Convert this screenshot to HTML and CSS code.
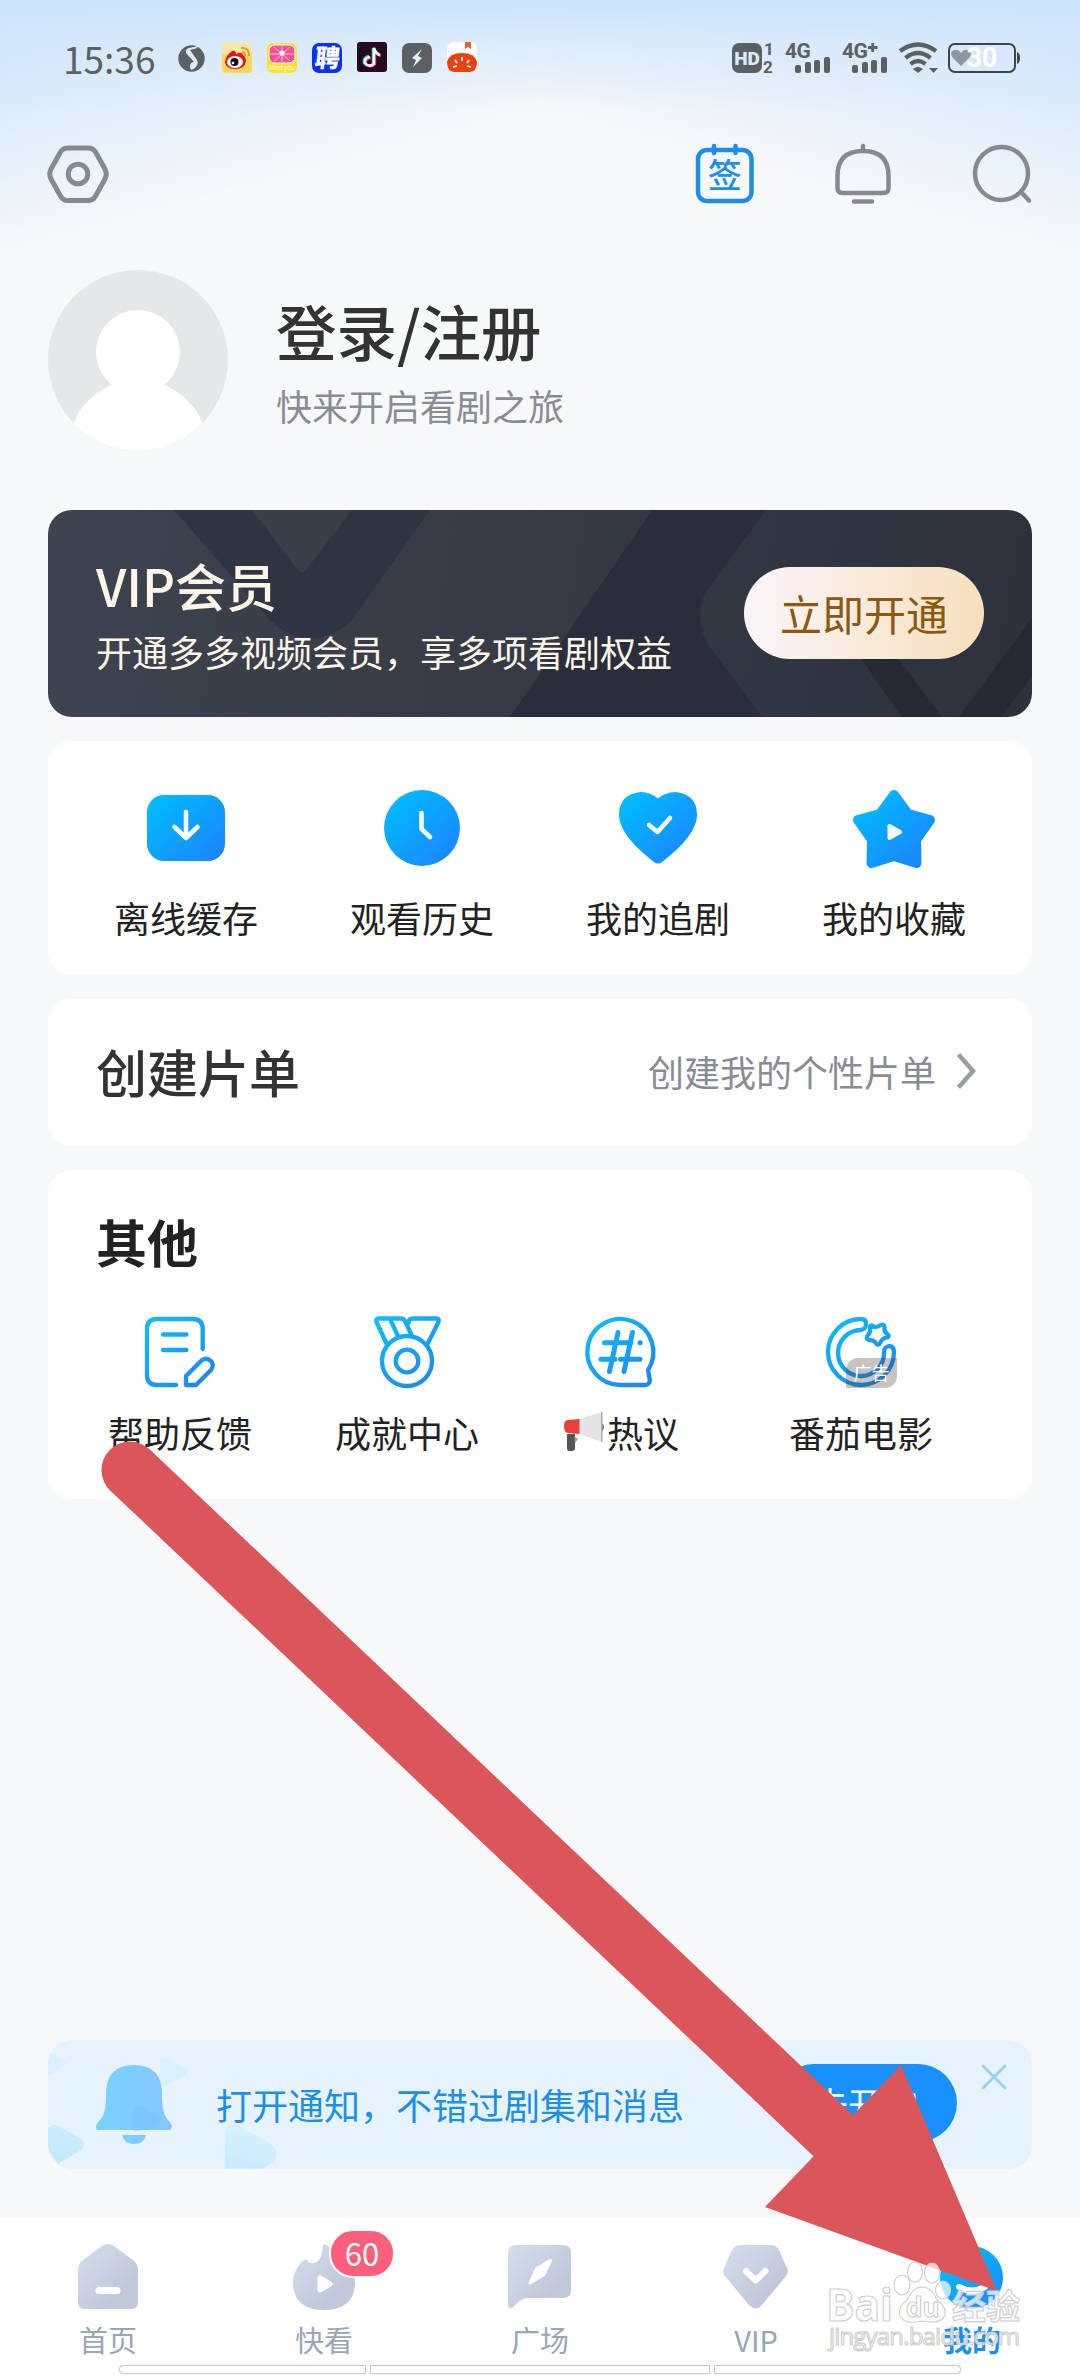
FILE: index.html
```html
<!DOCTYPE html>
<html lang="zh-CN">
<head>
    <meta charset="UTF-8">
    <meta name="viewport" content="width=device-width, initial-scale=1.0">
    <title>我的</title>
    <link rel="stylesheet" href="styles.css">
</head>
<body>
    <!-- gradientes compartilhados -->
    <svg class="defs" width="0" height="0">
        <defs>
            <linearGradient id="blue" gradientUnits="userSpaceOnUse" x1="12" y1="12" x2="70" y2="74">
                <stop offset="0" stop-color="#00bbff"/><stop offset="1" stop-color="#1c86ff"/>
            </linearGradient>
            <linearGradient id="line" gradientUnits="userSpaceOnUse" x1="8" y1="4" x2="62" y2="72">
                <stop offset="0" stop-color="#12bdf3"/><stop offset="1" stop-color="#1f86f2"/>
            </linearGradient>
            <linearGradient id="grey" gradientUnits="userSpaceOnUse" x1="6" y1="10" x2="50" y2="50">
                <stop offset="0" stop-color="#d2dcec"/><stop offset="1" stop-color="#c1c8d9"/>
            </linearGradient>
            <linearGradient id="bell" x1="0" y1="0" x2="1" y2="0">
                <stop offset="0" stop-color="#78d3ff"/><stop offset="1" stop-color="#86c5ff"/>
            </linearGradient>
            <linearGradient id="drop" x1="1" y1="0" x2="0" y2="1">
                <stop offset="0" stop-color="#d8f1fe"/><stop offset="1" stop-color="#c0e7fd"/>
            </linearGradient>
        </defs>
    </svg>

    <div class="phone">
        <div class="status-bar">
            <div class="status-left">
                <span class="time">15:36</span>
                <svg class="app music" viewBox="0 0 27 27">
                    <circle cx="13.5" cy="13.5" r="13.2" fill="#5b6063"/>
                    <path d="M22 0L18 3.500L12 5L19 15Q21 19 17 23Q12 27 12 22Q12 17 16 17L8 8Q7 4 11 3L18 1.500Z" fill="#dcebf9"/>
                </svg>
                <svg class="app" viewBox="0 0 30 30">
                    <rect width="30" height="30" rx="4" fill="#fdd65a"/>
                    <rect width="30" height="12" rx="4" fill="#fbe6a4"/>
                    <path d="M3 19Q4 12 10 8Q14 7 14 11Q20 8 21 12Q24 14 24 18Q23 26 13 26Q4 26 3 19Z" fill="#e6141b"/>
                    <ellipse cx="13" cy="19" rx="8" ry="6" fill="#fff"/>
                    <circle cx="12.5" cy="19" r="4" fill="#111"/><circle cx="11" cy="20" r="1.3" fill="#fff"/>
                    <path d="M19 5Q27 4 27 13M20 9Q23 9 23 13" fill="none" stroke="#f39a1d" stroke-width="2"/>
                </svg>
                <svg class="app" viewBox="0 0 30 30">
                    <rect width="30" height="30" rx="6" fill="#fbe231"/>
                    <rect x="2" y="2" width="26" height="18" rx="6" fill="#f9508f" stroke="#fff"/>
                    <path d="M15 3V19M3 11H27M7 4L23 18M23 4L7 18" stroke="#fcc3da" stroke-width="1"/>
                    <circle cx="15" cy="10" r="2.5" fill="#fff"/>
                    <text x="15" y="27" class="tiny">Meet you</text>
                </svg>
                <svg class="app" viewBox="0 0 30 30">
                    <rect width="30" height="30" rx="7" fill="#0a31f2"/>
                    <text x="17" y="24" class="pin" transform="skewX(-6)">聘</text>
                </svg>
                <svg class="app up" viewBox="0 0 30 30">
                    <rect width="30" height="30" rx="3" fill="#250a1f"/>
                    <path d="M12 14Q6 15 7 21Q11 26 16 22V6Q18 11 22 12" fill="none" stroke="#28e0e4" stroke-width="2.500"/>
                    <path d="M14 16Q8 17 9 22Q13 27 18 22V8Q20 13 24 14" fill="none" stroke="#ee2b52" stroke-width="2.500"/>
                    <path d="M13 15Q7 16 8 21Q12 26 17 22V6Q19 12 23 13" fill="none" stroke="#fff" stroke-width="2.500"/>
                </svg>
                <svg class="app" viewBox="0 0 30 30">
                    <rect width="30" height="30" rx="7" fill="#5b6063"/>
                    <path d="M20 6L10 15L14 17L11 24L20 15L16 13Z" fill="#e3eef8"/>
                </svg>
                <svg class="app up" viewBox="0 0 30 30">
                    <rect width="30" height="30" rx="7" fill="#fff"/>
                    <path d="M18 0H24V7L21 5L18 7Z" fill="#e0633c"/>
                    <path d="M0 20Q2 11 15 11Q28 11 30 20Q30 30 22 30H8Q0 30 0 20Z" fill="#e6420f"/>
                    <path d="M15 15V19M8 18L10 21M22 18L20 21M6 25L10 24M24 25L20 24" stroke="#fff" stroke-width="1.8"/>
                </svg>
            </div>
            <svg class="status-right" viewBox="0 0 290 34">
                <g fill="#5b6063">
                    <rect x="0" y="2" width="30" height="30" rx="7"/>
                    <text x="32" y="14" class="sim">1</text>
                    <text x="31" y="32" class="sim">2</text>
                    <text x="53" y="17" class="net">4G</text>
                    <rect x="63" y="24" width="6" height="8" rx="2"/><rect x="73" y="21" width="6" height="11" rx="2"/>
                    <rect x="82" y="19" width="6" height="13" rx="2"/><rect x="92" y="16" width="6" height="16" rx="2"/>
                    <text x="110" y="17" class="net">4G</text>
                    <path d="M136 6.500H145.500M140.700 2V11" stroke="#5b6063" stroke-width="2.800"/>
                    <rect x="120" y="24" width="6" height="8" rx="2"/><rect x="130" y="21" width="6" height="11" rx="2"/>
                    <rect x="139" y="19" width="6" height="13" rx="2"/><rect x="149" y="16" width="6" height="16" rx="2"/>
                    <path d="M181 28Q186 24 191 28L186 32Z"/>
                    <path d="M197 27H206L201.500 32Z"/>
                </g>
                <text x="15" y="24" class="hd">HD</text>
                <path d="M168 10Q186 -3 204 10M173.500 17Q186 7 198.500 17M178.500 23Q186 17 193.500 23" fill="none" stroke="#5b6063" stroke-width="4.200"/>
                <rect x="217" y="3" width="66" height="28" rx="6" fill="none" stroke="#3f4446" stroke-width="2"/>
                <path d="M285 11Q288 12 288 17Q288 22 285 23Z" fill="#3f4446"/>
                <path d="M229 25L221 17Q217 12 221 9.500Q226 7 229 12Q232 7 237 9.500Q241 12 237 17Z" fill="#8e979e"/>
                <text x="250" y="26" class="level">30</text>
            </svg>
        </div>

        <header class="top-bar">
            <svg class="top-icon" viewBox="0 0 64 64" fill="none" stroke="#868991" stroke-width="5">
                <path d="M22 6H42Q47 6 49.500 10L59 27Q61.500 32 59 37L49.500 54Q47 58.500 42 58.500H22Q17 58.500 14.500 54L5 37Q2.500 32 5 27L14.500 10Q17 6 22 6Z"/>
                <circle cx="32" cy="32" r="9.800"/>
            </svg>
            <div class="top-actions">
                <svg class="top-icon" viewBox="0 0 64 64" fill="none" stroke="#1e8fe9" stroke-width="4.500" stroke-linecap="round">
                    <rect x="6" y="8" width="53.500" height="51" rx="9"/>
                    <path d="M22 4V11M43.500 4V11"/>
                    <text x="32.700" y="46" class="sign">签</text>
                </svg>
                <svg class="top-icon" viewBox="0 0 64 64" fill="none" stroke="#868991" stroke-width="4.500" stroke-linecap="round">
                    <path d="M6.500 34Q6.500 9 32 9Q57.500 9 57.500 34V46Q57.500 51 52.500 51H11.500Q6.500 51 6.500 46ZM32 4V9M23 59.500H41"/>
                </svg>
                <svg class="top-icon" viewBox="0 0 64 64" fill="none" stroke="#868991" stroke-width="4.500" stroke-linecap="round">
                    <circle cx="31.500" cy="31.500" r="26.500"/>
                    <path d="M51 50L59 58.500"/>
                </svg>
            </div>
        </header>

        <section class="profile">
            <svg class="avatar" viewBox="0 0 180 180">
                <clipPath id="round"><circle cx="90" cy="90" r="90"/></clipPath>
                <g clip-path="url(#round)">
                    <rect width="180" height="180" fill="#e6e7e9"/>
                    <circle cx="90" cy="82" r="42" fill="#fff"/>
                    <circle cx="90" cy="200" r="70" fill="#fff"/>
                    <circle cx="90" cy="180" r="70" fill="#fff"/>
                </g>
            </svg>
            <div>
                <h1>登录/注册</h1>
                <p>快来开启看剧之旅</p>
            </div>
        </section>

        <main>
            <section class="vip">
                <svg class="vip-bg" viewBox="0 0 984 207">
                    <path d="M126 0H204L250 60Q254 66 258 60L304 0H382L304 110Q284 128 264 128Q240 128 222 110Z" fill="#2f3540"/>
                    <path d="M604 0H718L658 82Q648 100 655 124Q660 136 664 140L714 207H462Z" fill="#292e3a"/>
                    <path d="M800 130L854 207H894L836 130ZM911 207L984 108V166L953 207Z" fill="#242934"/>
                </svg>
                <div class="vip-text">
                    <h2>VIP会员</h2>
                    <p>开通多多视频会员，享多项看剧权益</p>
                </div>
                <button class="vip-btn">立即开通</button>
            </section>

            <section class="card shortcuts">
                <div class="shortcut">
                    <svg viewBox="0 0 84 84">
                        <rect x="3" y="9" width="78" height="66" rx="17" fill="url(#blue)"/>
                        <path d="M42 26V52M30.500 41L42 52L53.500 41" class="white-line"/>
                    </svg>
                    <span>离线缓存</span>
                </div>
                <div class="shortcut">
                    <svg viewBox="0 0 84 84">
                        <circle cx="42" cy="42" r="38" fill="url(#blue)"/>
                        <path d="M41.500 27V43L50 51" class="white-line"/>
                    </svg>
                    <span>观看历史</span>
                </div>
                <div class="shortcut">
                    <svg viewBox="0 0 84 84">
                        <path d="M42 12.500Q34 6 25 6Q3 8 3 29Q3 49 38 76Q42 79 46 76Q81 49 81 29Q81 8 59 6Q50 6 42 12.500Z" fill="url(#blue)"/>
                        <path d="M33 39L41.500 46L54 32" class="white-line"/>
                    </svg>
                    <span>我的追剧</span>
                </div>
                <div class="shortcut">
                    <svg viewBox="0 0 84 84">
                        <path d="M42 9L28 28L6 34L20 54L19.500 77L42 70L64.500 77L64 54L78 34L56 28Z" fill="url(#blue)" stroke="url(#blue)" stroke-width="10" stroke-linejoin="round"/>
                        <path d="M37.500 40V52L48 46Z" fill="#fff" stroke="#fff" stroke-width="4" stroke-linejoin="round"/>
                    </svg>
                    <span>我的收藏</span>
                </div>
            </section>

            <section class="card playlist">
                <h2>创建片单</h2>
                <div class="playlist-more">
                    <span>创建我的个性片单</span>
                    <svg viewBox="0 0 20 38"><path d="M2.500 2.500L17 19L2.500 35.500" fill="none" stroke="#999e9f" stroke-width="4.500"/></svg>
                </div>
            </section>

            <section class="card others">
                <h2>其他</h2>
                <div class="others-list">
                    <div class="cell"><div class="other">
                        <svg viewBox="0 0 76 76">
                            <path d="M60.700 35V15Q60.700 5 50.700 5H15Q5 5 5 15V61Q5 71 15 71H34M21 20.500H44.500M21 36H44.500"/>
                            <path d="M44 71V62L60 46Q65 43 69 47Q72.500 51 69 56L54 71Z"/>
                        </svg>
                        <span>帮助反馈</span>
                    </div></div>
                    <div class="cell"><div class="other">
                        <svg viewBox="0 0 76 76">
                            <circle cx="38" cy="47" r="25"/><circle cx="38" cy="47" r="11.300"/>
                            <path d="M17.700 30L7.500 8Q6 4.500 10 4.500H32Q35 4.500 36.500 8L42.500 21M21 5L29.500 23M39.500 9Q39.500 4.500 44 4.500H67Q71 4.500 69.500 8L58.500 30"/>
                        </svg>
                        <span>成就中心</span>
                    </div></div>
                    <div class="cell"><div class="other">
                        <svg viewBox="0 0 76 76">
                            <path d="M65 56A33 33 0 1 0 38 71H61Q68 71 66.500 64Z"/>
                            <path d="M35 18.500L26.500 57.500M49.500 18.500L41 57.500M21.500 28.700H48M18 45.300H32M37.500 45.300H57M57 28.700H57.200" class="hash"/>
                        </svg>
                        <span class="with-horn">
                            <svg class="horn" viewBox="0 0 40 40">
                                <path d="M3 22H11V36Q11 39 8 39H5Q3 39 3 36Z" fill="#555"/>
                                <path d="M10 24L14 27L11 31" fill="#999"/>
                                <path d="M37 11Q40 12 40 15Q40 19 37 19Z" fill="#777"/>
                                <path d="M15 7L38 0V30L15 22Z" fill="#e4e4e4"/>
                                <path d="M37 0H38.500V30H37Z" fill="#aaa"/>
                                <path d="M4 8L15.500 7V22L4 21Q0 21 0 14Q0 8 4 8Z" fill="#ea3f3b"/>
                            </svg>热议
                        </span>
                    </div></div>
                    <div class="cell"><div class="other">
                        <svg viewBox="0 0 76 76">
                            <path d="M38 5A33 33 0 1 0 71 38V37Q70 32 66 32Q61 33 61 38A23 23 0 1 1 38 16Q43 15 43 10Q43 5 38 5Z"/>
                            <path d="M50 12Q51 14 56 12Q61 9 61.500 13Q61 18 64 20Q68 23 62 24Q59 25 57 29Q55 33 52 28Q50 26 46 26Q42 25 45 21Q48 18 47 14Q47 10 50 12Z"/>
                        </svg>
                        <em class="ad">广告</em>
                        <span>番茄电影</span>
                    </div></div>
                </div>
            </section>
        </main>

        <section class="notice">
            <svg class="notice-bg" viewBox="0 0 430 129">
                <path d="M0 12Q16 18 18 24Q16 29 0 34ZM112 18Q120 16 136 28Q142 34 134 38L116 46Q112 46 112 40Z" fill="#d9f0fe"/>
                <path d="M0 88Q5 82 14 88L33 99Q38 104 33 110L10 124L0 110ZM177 92Q181 82 192 86L220 102Q240 115 215 129H177Z" fill="url(#drop)"/>
                <path d="M49 90Q46 86 51 81Q58 75 58 56Q57 25 86 25Q115 25 114 56Q114 75 121 81Q126 86 122 90Z" fill="url(#bell)"/>
                <path d="M74 95H98Q96 104 86 104Q76 104 74 95Z" fill="url(#bell)"/>
                <path d="M86 92V68Q88 64 92 66L110 76Q116 80 106 86Z" fill="#74bdf8" opacity=".3"/>
            </svg>
            <p>打开通知，不错过剧集和消息</p>
            <button class="notice-btn">去开启</button>
            <svg class="close" viewBox="0 0 26 26"><path d="M2 2L24 24M24 2L2 24" stroke="#9bcdf8" stroke-width="2.800" stroke-linecap="round"/></svg>
        </section>

        <nav class="tabs">
            <a class="tab">
                <svg viewBox="0 0 72 72">
                    <path d="M30 5Q36 1 42 5L61 19Q66 23 66 29V61Q66 68 59 68H13Q6 68 6 61V29Q6 23 11 19Z" fill="url(#grey)"/>
                    <path d="M27 49.500H45" stroke="#fff" stroke-width="7" stroke-linecap="round"/>
                </svg>
                <span>首页</span>
            </a>
            <a class="tab">
                <svg viewBox="0 0 72 72">
                    <path d="M15 20Q18 17 20.500 21Q25 24 30 20Q34 16 34.500 6Q36 1 40 5Q50 15 58 23Q67 31 67 42Q66 69 36 69Q6 69 5 42Q5 29 15 20Z" fill="url(#grey)"/>
                    <path d="M32 37V49L42 43Z" fill="#fff" stroke="#fff" stroke-width="5" stroke-linejoin="round"/>
                </svg>
                <b class="badge">60</b>
                <span>快看</span>
            </a>
            <a class="tab">
                <svg viewBox="0 0 72 72">
                    <path d="M12 4H59Q67 4 67 12V49Q67 57 59 57H23Q19 57 17 59L9 66Q4 69 4 63V12Q4 4 12 4Z" fill="url(#grey)"/>
                    <path d="M46.500 19.500L33 27L26 42L39.500 34Z" fill="#fff" stroke="#fff" stroke-width="3" stroke-linejoin="round"/>
                </svg>
                <span>广场</span>
            </a>
            <a class="tab">
                <svg viewBox="0 0 72 72">
                    <path d="M20 4H51Q56 4 59 9L67 27Q69 31 66 35L42 64Q36 71 29 64L5 35Q2 31 4 27L12 9Q15 4 20 4Z" fill="url(#grey)"/>
                    <path d="M26 30L35.700 39.500L45.500 30" class="white-line thick"/>
                </svg>
                <span>VIP</span>
            </a>
            <a class="tab active">
                <svg viewBox="0 0 72 72">
                    <circle cx="35.500" cy="36.500" r="31.500" fill="url(#blue)"/>
                    <path d="M23 46Q36 53 49 46" class="white-line thick"/>
                </svg>
                <span>我的</span>
            </a>
            <div class="gesture"><i></i><i></i><i></i></div>
        </nav>

        <svg class="arrow" viewBox="0 0 1080 2376" fill="#da565a">
            <path d="M130 1470L840 2142" stroke="#da565a" stroke-width="57" stroke-linecap="round"/>
            <path d="M901 2065L997 2291L765 2207Z"/>
        </svg>

        <svg class="watermark" viewBox="0 0 200 110">
            <g class="wm-shape">
                <ellipse cx="74" cy="35" rx="8" ry="10"/>
                <ellipse cx="87" cy="22" rx="7.500" ry="10"/><ellipse cx="104" cy="23" rx="7.500" ry="10"/>
                <ellipse cx="115" cy="40" rx="7.500" ry="9"/>
                <path d="M94 37Q104 37 109 50Q119 57 117 65Q113 75 94 71Q76 75 72 66Q69 57 79 50Q85 37 94 37Z"/>
            </g>
            <text x="-2" y="71" class="wm-big" textLength="67" lengthAdjust="spacingAndGlyphs">Bai</text>
            <text x="78" y="67" class="wm-du">du</text>
            <text x="124" y="69" class="wm-cn">经验</text>
            <text x="1" y="95" class="wm-url" textLength="191">jingyan.baidu.com</text>
        </svg>
    </div>
</body>
</html>
```
FILE: styles.css
```css
* {
    box-sizing: border-box;
    margin: 0;
    padding: 0;
}
body {
    background-color: #f6f8fa;
    color: #222;
    font-family: "Noto Sans CJK SC", sans-serif;
    font-size: 36px;
}
h1, h2 {
    font-weight: 500;
}
svg {
    display: block;
    flex-shrink: 0;
    overflow: visible;
}
button {
    border: none;
    font-family: inherit;
}
.defs {
    position: absolute;
}
.phone {
    position: relative;
    width: 1080px;
    height: 2376px;
    display: flex;
    flex-direction: column;
    overflow: hidden;
    background:
        linear-gradient(180deg, #cde4fd 0, rgba(214, 232, 250, 0.6) 45px, rgba(246, 248, 250, 0) 110px) 0 0 / 1080px 110px no-repeat,
        linear-gradient(165deg, #cbe3fd 0, #dcebfa 100px, #f6f8fa 245px) 0 0 / 540px 260px no-repeat,
        linear-gradient(195deg, #cbe3fd 0, #dcebfa 100px, #f6f8fa 245px) 540px 0 / 540px 260px no-repeat,
        #f6f8fa;
}

/* barra de status */
.status-bar {
    height: 116px;
    padding: 41px 60px 0 63px;
    display: flex;
    justify-content: space-between;
    align-items: flex-start;
}
.status-left {
    display: flex;
    align-items: center;
    gap: 15px;
    height: 34px;
}
.time {
    width: 100px;
    font-size: 37px;
    line-height: 34px;
    color: #5b6063;
}
.app {
    width: 30px;
    height: 30px;
}
.app.up {
    margin-top: -2px;
}
.app.music {
    width: 27px;
    height: 27px;
    margin-right: 2px;
}
.status-right {
    width: 290px;
    height: 34px;
    margin-right: -2px;
}
.tiny {
    font-size: 6px;
    fill: #fff;
    text-anchor: middle;
}
.pin {
    font-size: 25px;
    font-weight: 900;
    fill: #fff;
    text-anchor: middle;
}
.sim {
    font: bold 17px Roboto, sans-serif;
}
.net {
    font: bold 21px Roboto, sans-serif;
    letter-spacing: -0.5px;
}
.hd {
    font: 900 19px Roboto, sans-serif;
    fill: #dcebf9;
    text-anchor: middle;
}
.level {
    font: bold 27px Roboto, sans-serif;
    fill: #fff;
    text-anchor: middle;
}

/* topo */
.top-bar {
    height: 116px;
    padding: 26px 46px 0;
    display: flex;
    justify-content: space-between;
}
.top-actions {
    display: flex;
    gap: 75px;
}
.top-icon {
    width: 64px;
    height: 64px;
}
.sign {
    font-size: 34px;
    font-weight: 500;
    fill: #1e8fe9;
    stroke: none;
    text-anchor: middle;
}
.profile {
    display: flex;
    gap: 48px;
    padding: 38px 48px 0;
    height: 278px;
}
.avatar {
    width: 180px;
    height: 180px;
}
.profile h1 {
    margin-top: 22px;
    font-size: 60.5px;
    line-height: 76px;
    color: #333;
}
.profile p {
    margin-top: 15px;
    line-height: 44px;
    color: #8a8c93;
}

main {
    display: flex;
    flex-direction: column;
    gap: 24px;
    padding: 0 48px;
}
.vip {
    position: relative;
    height: 207px;
    padding: 0 48px;
    display: flex;
    justify-content: space-between;
    align-items: center;
    border-radius: 24px;
    overflow: hidden;
    background: linear-gradient(100deg, #3e444f 0%, #363b46 45%, #2f3540 80%, #2d313c 100%);
    color: #fdf5ea;
}
.vip-bg {
    position: absolute;
    left: 0;
    top: 0;
    width: 984px;
    height: 207px;
}
.vip-text, .vip-btn {
    position: relative;
}
.vip h2 {
    font-size: 51px;
    line-height: 60px;
}
.vip p {
    margin-top: 14px;
    line-height: 44px;
}
.vip-btn {
    width: 240px;
    height: 92px;
    margin-bottom: 2px;
    border-radius: 46px;
    background: linear-gradient(90deg, #faf5fb, #f9eadb 50%, #f6dfbd);
    color: #8a5810;
    font-size: 42px;
}

.card {
    background-color: #fff;
    border-radius: 24px;
}
.shortcuts {
    display: flex;
    height: 234px;
    padding: 45px 20px 0;
}
.shortcut {
    flex: 1;
    display: flex;
    flex-direction: column;
    align-items: center;
    gap: 25px;
    line-height: 44px;
}
.shortcut svg {
    width: 84px;
    height: 84px;
}
.white-line {
    fill: none;
    stroke: #fff;
    stroke-width: 4.5;
    stroke-linecap: round;
    stroke-linejoin: round;
}
.thick {
    stroke-width: 6;
}
.playlist {
    height: 147px;
    padding: 0 56px 3px 48px;
    display: flex;
    justify-content: space-between;
    align-items: center;
}
.playlist h2, .others h2 {
    font-size: 51px;
    line-height: 60px;
}
.playlist h2 {
    color: #333;
}
.playlist-more {
    display: flex;
    align-items: center;
    gap: 20px;
    color: #8a8c93;
}
.playlist-more svg {
    width: 20px;
    height: 38px;
}
.others {
    height: 329px;
    padding: 41px 0 0 48px;
}
.others h2 {
    font-weight: 700;
}
.others-list {
    display: flex;
    margin-top: 43px;
    padding-left: 12px;
}
.cell {
    width: 227px;
    display: flex;
}
.other {
    position: relative;
    display: flex;
    flex-direction: column;
    align-items: center;
    gap: 20px;
    line-height: 44px;
    white-space: nowrap;
}
.other > svg {
    width: 76px;
    height: 76px;
    fill: none;
    stroke: url(#line);
    stroke-width: 4.3;
    stroke-linecap: round;
    stroke-linejoin: round;
}
.hash {
    stroke-width: 5;
}
.with-horn {
    display: flex;
    align-items: center;
    gap: 3px;
}
.horn {
    width: 40px;
    height: 40px;
    margin-left: 2px;
}
.ad {
    position: absolute;
    left: 57px;
    top: 44px;
    width: 51px;
    height: 30px;
    border-radius: 12px 0 12px 0;
    background-color: rgba(60, 60, 60, 0.3);
    color: #fff;
    font-size: 18px;
    font-style: normal;
    line-height: 29px;
    text-align: center;
}

.notice {
    position: relative;
    height: 129px;
    margin: auto 48px 48px;
    padding: 0 75px 0 168px;
    display: flex;
    justify-content: space-between;
    align-items: center;
    border-radius: 24px;
    overflow: hidden;
    background-color: #e6f3ff;
    color: #1e8fe6;
}
.notice-bg {
    position: absolute;
    left: 0;
    top: 0;
    width: 430px;
    height: 129px;
}
.notice p {
    position: relative;
    margin-bottom: 2px;
}
.notice-btn {
    width: 182px;
    height: 78px;
    margin-bottom: 3px;
    border-radius: 39px;
    background-color: #1890ff;
    color: #fff;
    font-size: 36px;
}
.close {
    position: absolute;
    right: 25px;
    top: 24px;
    width: 26px;
    height: 26px;
}

/* menu inferior */
.tabs {
    position: relative;
    height: 159px;
    flex-shrink: 0;
    display: flex;
    background-color: #fff;
}
.tab {
    position: relative;
    flex: 1;
    padding-top: 24px;
    display: flex;
    flex-direction: column;
    align-items: center;
    gap: 8px;
    color: #9aa5b5;
    font-size: 29px;
    line-height: 36px;
}
.tab svg {
    width: 72px;
    height: 72px;
}
.tab.active {
    color: #1e8fe6;
    font-weight: 700;
}
.badge {
    position: absolute;
    left: 113px;
    top: 12px;
    width: 66px;
    height: 49px;
    border: 2px solid #fff;
    border-radius: 24px;
    background-color: #ff5f7a;
    color: #fff;
    font-size: 31px;
    font-weight: 400;
    line-height: 44px;
    text-align: center;
}
.gesture {
    position: absolute;
    left: 119px;
    bottom: 2px;
    width: 842px;
    display: flex;
    gap: 4px;
}
.gesture i {
    flex: 247;
    height: 9px;
    border: 1px solid #ccc;
    background-color: #fff;
    box-shadow: 0 0 1px #bbb;
}
.gesture i:first-child {
    border-radius: 5px 0 0 5px;
}
.gesture i:nth-child(2) {
    flex: 340;
}
.gesture i:last-child {
    border-radius: 0 5px 5px 0;
}

.arrow {
    position: absolute;
    left: 0;
    top: 0;
    width: 1080px;
    height: 2376px;
}
.watermark {
    position: absolute;
    left: 828px;
    top: 2250px;
    width: 200px;
    height: 110px;
    fill: rgba(255, 255, 255, 0.75);
    stroke: #cfcfcf;
    stroke-width: 1.2px;
}
.wm-shape {
    fill: rgba(255, 255, 255, 0.7);
}
.wm-big {
    font: bold 44px "Open Sans", sans-serif;
}
.wm-du {
    font: bold 26px "Open Sans", sans-serif;
}
.wm-cn {
    font-size: 34px;
    font-weight: 700;
}
.wm-url {
    font: 24px "Open Sans", sans-serif;
}
```
